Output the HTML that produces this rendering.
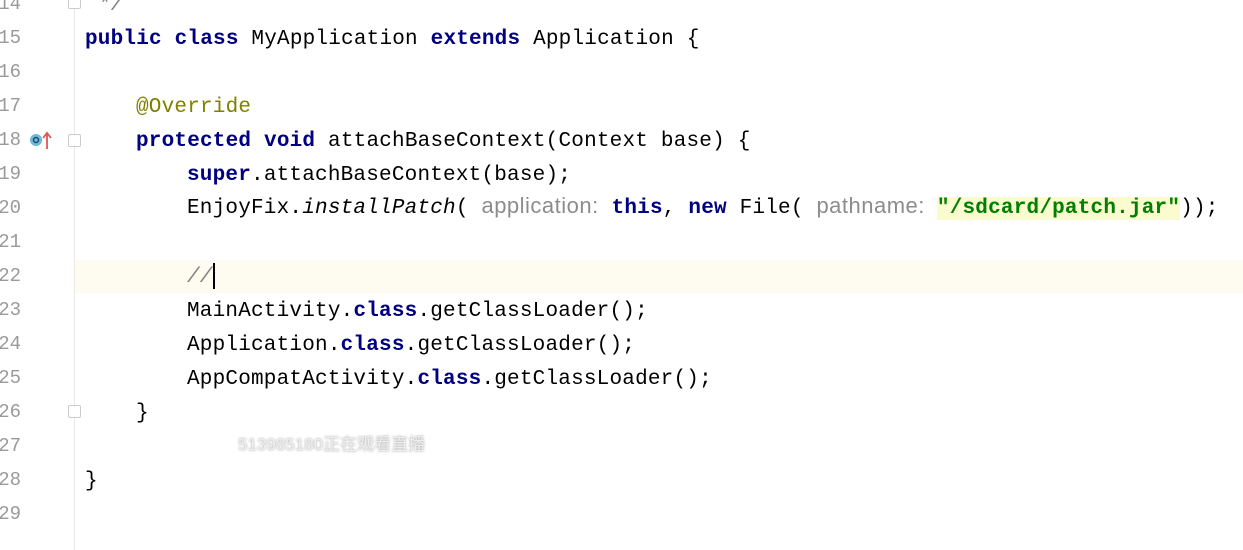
<!DOCTYPE html>
<html><head><meta charset="utf-8"><style>
body{margin:0;width:1243px;height:550px;background:#fff;overflow:hidden;position:relative;font-family:"Liberation Mono",monospace}
.ln{position:absolute;left:-3px;width:24px;text-align:right;font-size:19px;color:#9a9a9a;height:34px;line-height:34px}
.gut{position:absolute;left:74px;top:0;width:1px;height:550px;background:#e8e8e8}
.cur{position:absolute;left:75px;right:0;top:260px;height:33px;background:#fefcf0}
.c{position:absolute;height:34px;line-height:34px;font-size:21px;letter-spacing:0.2px;color:#000;white-space:pre}
.k{color:#000080;font-weight:bold}
.a{color:#808000}
.i{font-style:italic}
.h{font-family:"Liberation Sans",sans-serif;color:#8c8c8c;font-size:22px;letter-spacing:0.5px;line-height:0}
.s{color:#008000;font-weight:bold;background:#fbfbd0;margin-left:12px}
.cm{color:#808080;font-style:italic}
.fold{position:absolute;left:68px;width:11px;height:11px;border:1px solid #ccc;background:#fff;border-radius:2px}
.wm{position:absolute;left:238px;top:430px;font-family:"Liberation Sans","Noto Sans CJK SC",sans-serif;font-size:17px;color:#eee;text-shadow:0 0 2px #999}
</style></head><body>
<div class="cur"></div>
<div class="gut"></div>
<div class="ln" style="top:-13px">14</div>
<div class="ln" style="top:21px">15</div>
<div class="ln" style="top:55px">16</div>
<div class="ln" style="top:89px">17</div>
<div class="ln" style="top:123px">18</div>
<div class="ln" style="top:157px">19</div>
<div class="ln" style="top:191px">20</div>
<div class="ln" style="top:225px">21</div>
<div class="ln" style="top:259px">22</div>
<div class="ln" style="top:293px">23</div>
<div class="ln" style="top:327px">24</div>
<div class="ln" style="top:361px">25</div>
<div class="ln" style="top:395px">26</div>
<div class="ln" style="top:429px">27</div>
<div class="ln" style="top:463px">28</div>
<div class="ln" style="top:497px">29</div>
<svg style="position:absolute;left:28px;top:131px" width="26" height="20"><circle cx="8" cy="9" r="6" fill="#6fb7db"/><circle cx="8" cy="9" r="2.5" fill="none" stroke="#1d4f6e" stroke-width="1.5"/><path d="M19 18V3M15 7l4-5 4 5" stroke="#e05555" stroke-width="1.8" fill="none"/></svg>
<div class="fold" style="top:-4px"></div>
<div class="fold" style="top:134px"></div>
<div class="fold" style="top:405px"></div>
<div class="c cm" style="left:98px;top:-11px">*/</div>
<div class="c" style="left:85px;top:23px"><span class="k">public class</span> MyApplication <span class="k">extends</span> Application {</div>
<div class="c a" style="left:136px;top:91px">@Override</div>
<div class="c" style="left:136px;top:125px"><span class="k">protected void</span> attachBaseContext(Context base) {</div>
<div class="c" style="left:187px;top:159px"><span class="k">super</span>.attachBaseContext(base);</div>
<div class="c" style="left:187px;top:192px">EnjoyFix.<span class="i">installPatch</span>( <span class="h">application:</span> <span class="k">this</span>, <span class="k">new</span> File( <span class="h">pathname:</span><span class="s">"/sdcard/patch.jar"</span>));</div>
<div class="c cm" style="left:187px;top:261px">//<span style="display:inline-block;width:2px;height:26px;background:#000;vertical-align:middle;font-style:normal"></span></div>
<div class="c" style="left:187px;top:295px">MainActivity.<span class="k">class</span>.getClassLoader();</div>
<div class="c" style="left:187px;top:329px">Application.<span class="k">class</span>.getClassLoader();</div>
<div class="c" style="left:187px;top:363px">AppCompatActivity.<span class="k">class</span>.getClassLoader();</div>
<div class="c" style="left:136px;top:397px">}</div>
<div class="c" style="left:85px;top:465px">}</div>
<div class="wm">513985180正在观看直播</div>
</body></html>
